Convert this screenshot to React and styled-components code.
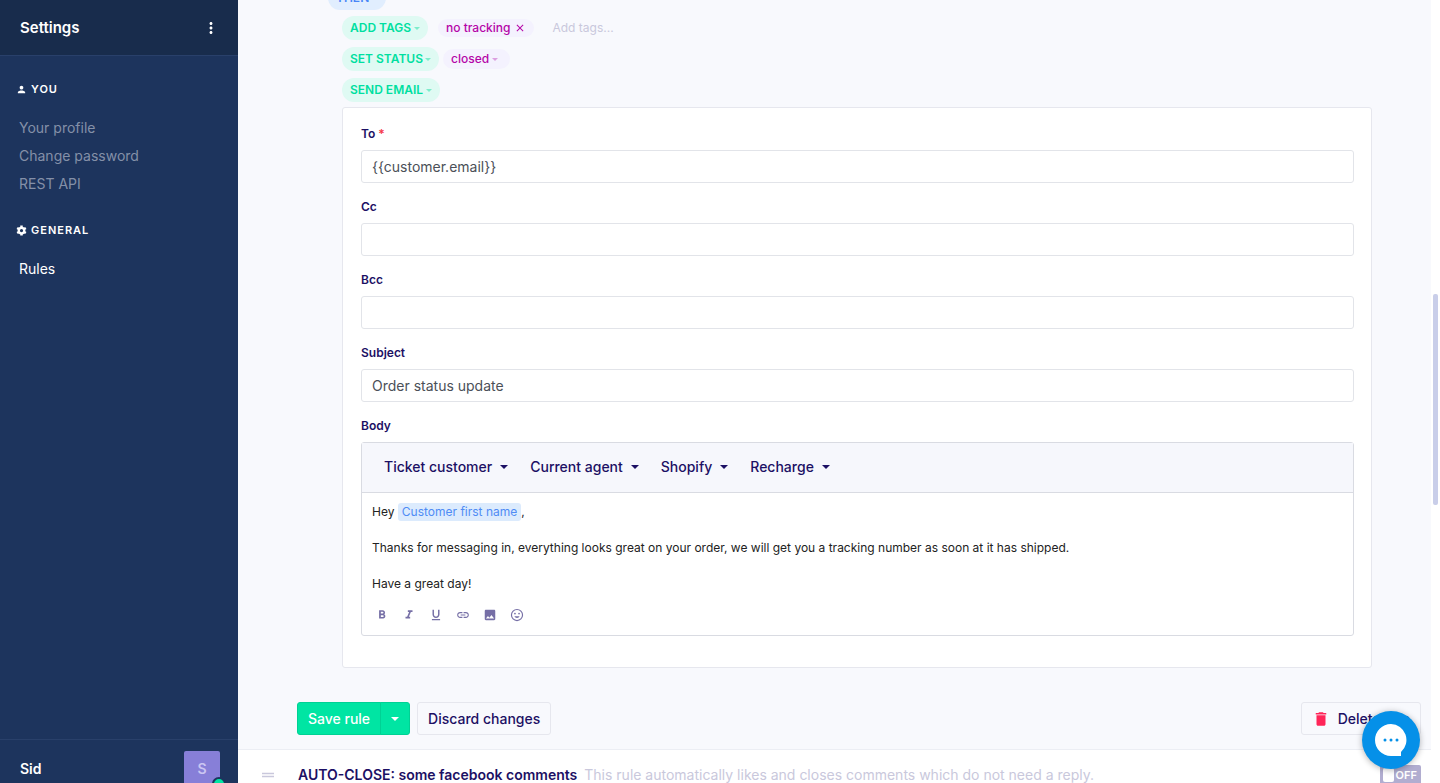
import React, { useState } from "react";
import styled, { createGlobalStyle } from "styled-components";
import {
  MdClose,
  MdDelete,
  MdDragHandle,
  MdFormatBold,
  MdFormatItalic,
  MdFormatUnderlined,
  MdImage,
  MdInsertLink,
  MdMoreVert,
  MdPerson,
} from "react-icons/md";

const GlobalStyle = createGlobalStyle`
  * {
    box-sizing: border-box;
  }

  body {
    margin: 0;
    color: #1c1064;
    background: #ffffff;
    font-family: Inter, "Liberation Sans", sans-serif;
    font-size: 14px;
  }

  button, input, select {
    font: inherit;
    color: inherit;
  }

  p {
    margin: 0;
  }
`;

const Page = styled.div`
  display: flex;
  height: 100vh;
  overflow: hidden;
`;

const Sidebar = styled.nav`
  display: flex;
  flex-direction: column;
  flex: none;
  width: 238px;
  background: #1d345d;
  color: white;
`;

const SidebarHeader = styled.div`
  display: flex;
  align-items: center;
  justify-content: space-between;
  height: 56px;
  padding: 0 18px 0 20px;
  background: #182c4c;
  border-bottom: 1px solid #29406a;
`;

const SidebarTitle = styled.h1`
  margin: 0;
  font-size: 15px;
  line-height: 20px;
  font-weight: 600;
`;

const IconButton = styled.button`
  display: flex;
  padding: 0;
  border: 0;
  background: none;
`;

const Section = styled.section`
  padding: 25px 16px 0;

  & + & {
    padding-top: 24px;
  }
`;

const SectionTitle = styled.h2`
  display: flex;
  align-items: center;
  gap: 4px;
  margin: 0 0 17px;
  font-size: 11px;
  line-height: 16px;
  font-weight: 600;
  letter-spacing: 1px;
  text-transform: uppercase;
`;

const NavLink = styled.a`
  display: block;
  padding-left: 3px;
  line-height: 28px;
  text-decoration: none;
  color: ${(props) => (props.$active ? "white" : "#8490a8")};
`;

const SidebarFooter = styled.div`
  display: flex;
  justify-content: space-between;
  height: 44px;
  margin-top: auto;
  padding: 11px 18px 0 20px;
  border-top: 1px solid #29406a;
  font-weight: 600;
  line-height: 36px;
`;

const Avatar = styled.div`
  position: relative;
  width: 36px;
  height: 36px;
  border-radius: 2px;
  background: #877fd8;
  color: #cbc6f2;
  text-align: center;
`;

const OnlineDot = styled.span`
  position: absolute;
  right: -6px;
  bottom: -4px;
  width: 14px;
  height: 14px;
  border: 2px solid #1d345d;
  border-radius: 50%;
  background: #00e5a3;
`;

const Main = styled.main`
  flex: 1;
  min-width: 0;
  overflow: hidden;
  background: #f8f9fd;
`;

// The list is scrolled down, so the first row is cut by the top edge.
const Steps = styled.div`
  margin: -14px 59px 0 90px;
`;

const Actions = styled.div`
  display: flex;
  flex-direction: column;
  gap: 7px;
  margin: 6px 0 5px 14px;
`;

const ActionRow = styled.div`
  display: flex;
  align-items: center;
  gap: 4px;
`;

const tones = {
  logic: { color: "#4a86f7", background: "#e1eefe", caret: "#a9c8fb" },
  action: { color: "#00dfa0", background: "#dffaf3", caret: "#7eeccb" },
  value: { color: "#b505a8", background: "#f4f2fe", caret: "#dc9fe0" },
};

const Pill = styled.label`
  display: flex;
  align-items: center;
  gap: 2px;
  height: ${(props) => (props.$tone === "value" ? 20 : 24)}px;
  padding: 0 ${(props) => (props.$tone === "value" ? 12 : 8)}px 0 8px;
  border-radius: 12px;
  color: ${(props) => tones[props.$tone].color};
  background: ${(props) => tones[props.$tone].background};
  font-size: 12px;
  font-weight: ${(props) => (props.$tone === "value" ? 500 : 600)};

  svg {
    color: ${(props) => tones[props.$tone].caret};
  }
`;

const PillSelect = styled.select`
  appearance: none;
  height: 16px;
  padding: 0 0 1px;
  border: 0;
  background: none;
`;

const Tag = styled.span`
  display: flex;
  align-items: center;
  gap: 4px;
  height: 18px;
  margin-left: 6px;
  padding: 0 8px;
  border-radius: 9px;
  color: #b505a8;
  background: #f4f2fe;
  font-size: 12px;
  line-height: 16px;
  font-weight: 500;
`;

const TagInput = styled.input`
  height: 16px;
  margin-left: 14px;
  padding: 0 0 1px;
  border: 0;
  background: none;
  font-size: 12px;

  &::placeholder {
    color: #c9c8dc;
    opacity: 1;
  }
`;

const Card = styled.form`
  margin-left: 14px;
  padding: 17px 17px 31px 18px;
  background: white;
  border: 1px solid #e6e7ee;
  border-radius: 3px;
`;

const Field = styled.div`
  margin-bottom: 15px;
`;

const Label = styled.label`
  display: block;
  margin-bottom: 7px;
  font-size: 12px;
  line-height: 18px;
  font-weight: 600;
`;

const Required = styled.span`
  color: #f5384a;
`;

const TextInput = styled.input`
  display: block;
  width: 100%;
  height: 33px;
  padding: 0 10px;
  border: 1px solid #e2e4e9;
  border-radius: 3px;
  color: #4b5058;
`;

const Editor = styled.div`
  border: 1px solid #d9dbe2;
  border-radius: 3px;
`;

const VariableBar = styled.div`
  display: flex;
  align-items: center;
  gap: 22px;
  height: 50px;
  padding: 0 22px 2px;
  background: #f6f7fc;
  border-bottom: 1px solid #d9dbe2;
`;

const MenuButton = styled.button`
  display: flex;
  align-items: center;
  gap: 8px;
  padding: 0;
  border: 0;
  background: none;
  font-weight: 500;
`;

const EditorText = styled.div`
  padding: 10px 10px 0;
  color: #222222;
  font-size: 12px;
  line-height: 18px;
  outline: none;

  p {
    min-height: 18px;
  }
`;

const Variable = styled.span`
  display: inline-block;
  padding: 0 4px;
  border-radius: 3px;
  background: #dcebfd;
  color: #4f8cf5;
`;

const FormatBar = styled.div`
  display: flex;
  gap: 13px;
  padding: 15px 13px 13px;
  color: #766fa6;
`;

const FooterBar = styled.div`
  display: flex;
  align-items: center;
  gap: 7px;
  padding: 34px 10px 14px 59px;
`;

const Button = styled.button`
  display: flex;
  align-items: center;
  gap: 8px;
  height: 33px;
  padding: 0 10px;
  border: 1px solid #e6e7ee;
  border-radius: 3px;
  background: #f8f9fd;
  font-weight: 500;
`;

const DeleteButton = styled(Button)`
  margin-left: auto;

  svg {
    color: #ff2558;
  }
`;

const SplitButton = styled.div`
  display: flex;

  ${Button} {
    color: white;
    background: #00e5a3;
    border-color: #00d194;
  }

  ${Button}:first-child {
    border-radius: 3px 0 0 3px;
  }

  ${Button}:last-child {
    margin-left: -1px;
    border-radius: 0 3px 3px 0;
  }
`;

const RuleRow = styled.div`
  display: flex;
  align-items: center;
  height: 50px;
  padding: 0 10px 0 21px;
  border-top: 1px solid #eceef4;
  background: white;
  line-height: 16px;
`;

const RuleHandle = styled.span`
  display: flex;
  width: 39px;
  color: #c9c8dc;
`;

const RuleName = styled.strong`
  font-weight: 600;
`;

const RuleNote = styled.span`
  margin-left: 7px;
  color: #c9c8dc;
`;

const Toggle = styled.label`
  display: flex;
  align-items: center;
  gap: 2px;
  height: 20px;
  margin-left: auto;
  padding: 0 4px 0 3px;
  border-radius: 2px;
  background: #b1add0;
  color: white;
  font-size: 11px;
  font-weight: 600;
`;

const ToggleBox = styled.input`
  appearance: none;
  width: 11px;
  height: 14px;
  margin: 0;
  border-radius: 2px;
  background: white;
`;

const ScrollTrack = styled.div`
  display: grid;
  flex: none;
  grid-template-rows: 294fr 211fr 278fr;
  width: 9px;
  padding: 0 2px;
  background: white;
`;

const ScrollThumb = styled.div`
  grid-row: 2;
  border-radius: 2px;
  background: #c9cee9;
`;

const ChatButton = styled.button`
  position: fixed;
  right: 20px;
  bottom: 14px;
  display: flex;
  align-items: center;
  justify-content: center;
  width: 58px;
  height: 58px;
  padding: 0;
  border: 0;
  border-radius: 50%;
  background: #0590e8;
  box-shadow: 0 1px 6px rgba(0, 0, 0, 0.3);
`;

const Caret = ({ size = 8 }) => (
  <svg width={size} height={size / 2} viewBox="0 0 8 4" aria-hidden="true">
    <path d="M0 0h8L4 4z" fill="currentColor" />
  </svg>
);

const Gear = () => (
  <svg width="11" height="11" viewBox="0 0 22 22" fill="none" aria-hidden="true">
    <circle cx="11" cy="11" r="5.500" stroke="currentColor" strokeWidth="4.500" />
    <g stroke="currentColor" strokeWidth="5">
      <path d="M11 1v4M11 17v4" />
      <path d="M11 1v4M11 17v4" transform="rotate(60 11 11)" />
      <path d="M11 1v4M11 17v4" transform="rotate(120 11 11)" />
    </g>
  </svg>
);

const Smile = () => (
  <svg width="14" height="14" viewBox="0 0 24 24" fill="none" aria-hidden="true">
    <circle cx="12" cy="12" r="9.500" stroke="currentColor" strokeWidth="2" />
    <path d="M7.500 14h9a4.800 4.800 0 0 1-9 0z" fill="currentColor" />
    <circle cx="8.500" cy="9.500" r="1.500" fill="currentColor" />
    <circle cx="15.500" cy="9.500" r="1.500" fill="currentColor" />
  </svg>
);

const PillDropdown = ({ tone, label, value }) => (
  <Pill $tone={tone}>
    <PillSelect aria-label={label}>
      <option>{value}</option>
    </PillSelect>
    <Caret size={6} />
  </Pill>
);

const TextField = ({ id, label, required, value = "" }) => (
  <Field>
    <Label htmlFor={id}>
      {label} {required && <Required>*</Required>}
    </Label>
    <TextInput id={id} defaultValue={value} />
  </Field>
);

const variables = ["Ticket customer", "Current agent", "Shopify", "Recharge"];

const formats = [
  ["Bold", <MdFormatBold size={14} />],
  ["Italic", <MdFormatItalic size={14} />],
  ["Underline", <MdFormatUnderlined size={14} />],
  ["Link", <MdInsertLink size={14} />],
  ["Image", <MdImage size={14} />],
  ["Emoji", <Smile />],
];

export default function App() {
  const [enabled, setEnabled] = useState(false);

  return (
    <Page>
      <GlobalStyle />
      <Sidebar>
        <SidebarHeader>
          <SidebarTitle>Settings</SidebarTitle>
          <IconButton aria-label="More">
            <MdMoreVert size={18} />
          </IconButton>
        </SidebarHeader>
        <Section>
          <SectionTitle>
            <MdPerson size={11} /> You
          </SectionTitle>
          <NavLink href="#profile">Your profile</NavLink>
          <NavLink href="#password">Change password</NavLink>
          <NavLink href="#api">REST API</NavLink>
        </Section>
        <Section>
          <SectionTitle>
            <Gear /> General
          </SectionTitle>
          <NavLink href="#rules" $active>
            Rules
          </NavLink>
        </Section>
        <SidebarFooter>
          <span>Sid</span>
          <Avatar>
            S
            <OnlineDot />
          </Avatar>
        </SidebarFooter>
      </Sidebar>

      <Main>
        <Steps>
          <ActionRow>
            <PillDropdown tone="logic" label="Logic" value="THEN" />
          </ActionRow>
          <Actions>
            <ActionRow>
              <PillDropdown tone="action" label="Action" value="ADD TAGS" />
              <Tag>
                no tracking
                <IconButton aria-label="Remove tag">
                  <MdClose size={12} />
                </IconButton>
              </Tag>
              <TagInput aria-label="Tags" placeholder="Add tags..." />
            </ActionRow>
            <ActionRow>
              <PillDropdown tone="action" label="Action" value="SET STATUS" />
              <PillDropdown tone="value" label="Status" value="closed" />
            </ActionRow>
            <ActionRow>
              <PillDropdown tone="action" label="Action" value="SEND EMAIL" />
            </ActionRow>
          </Actions>
          <Card>
            <TextField id="to" label="To" required value="{{customer.email}}" />
            <TextField id="cc" label="Cc" />
            <TextField id="bcc" label="Bcc" />
            <TextField id="subject" label="Subject" value="Order status update" />
            <Label as="div" id="body-label">
              Body
            </Label>
            <Editor>
              <VariableBar>
                {variables.map((name) => (
                  <MenuButton key={name} type="button" aria-haspopup="menu">
                    {name} <Caret />
                  </MenuButton>
                ))}
              </VariableBar>
              <EditorText
                role="textbox"
                aria-labelledby="body-label"
                contentEditable
                suppressContentEditableWarning
              >
                <p>
                  Hey <Variable>Customer first name</Variable>,
                </p>
                <p />
                <p>
                  Thanks for messaging in, everything looks great on your order, we will get you a
                  tracking number as soon at it has shipped.
                </p>
                <p />
                <p>Have a great day!</p>
              </EditorText>
              <FormatBar>
                {formats.map(([name, icon]) => (
                  <IconButton key={name} type="button" aria-label={name}>
                    {icon}
                  </IconButton>
                ))}
              </FormatBar>
            </Editor>
          </Card>
        </Steps>
        <FooterBar>
          <SplitButton>
            <Button>Save rule</Button>
            <Button aria-label="More save options">
              <Caret />
            </Button>
          </SplitButton>
          <Button>Discard changes</Button>
          <DeleteButton>
            <MdDelete size={18} /> Delete rule
          </DeleteButton>
        </FooterBar>
        <RuleRow>
          <RuleHandle>
            <MdDragHandle size={18} />
          </RuleHandle>
          <RuleName>AUTO-CLOSE: some facebook comments</RuleName>
          <RuleNote>
            This rule automatically likes and closes comments which do not need a reply.
          </RuleNote>
          <Toggle>
            <ToggleBox
              type="checkbox"
              checked={enabled}
              onChange={() => setEnabled(!enabled)}
            />
            {enabled ? "ON" : "OFF"}
          </Toggle>
        </RuleRow>
      </Main>

      <ScrollTrack>
        <ScrollThumb />
      </ScrollTrack>

      <ChatButton aria-label="Open chat">
        <svg width="32" height="32" viewBox="0 0 32 32" aria-hidden="true">
          <path d="M16 0a16 16 0 1 0 0 32h10v-4A16 16 0 0 0 16 0z" fill="white" />
          <circle cx="10" cy="16" r="1.500" fill="#0590e8" />
          <circle cx="16" cy="16" r="1.500" fill="#0590e8" />
          <circle cx="22" cy="16" r="1.500" fill="#0590e8" />
        </svg>
      </ChatButton>
    </Page>
  );
}
